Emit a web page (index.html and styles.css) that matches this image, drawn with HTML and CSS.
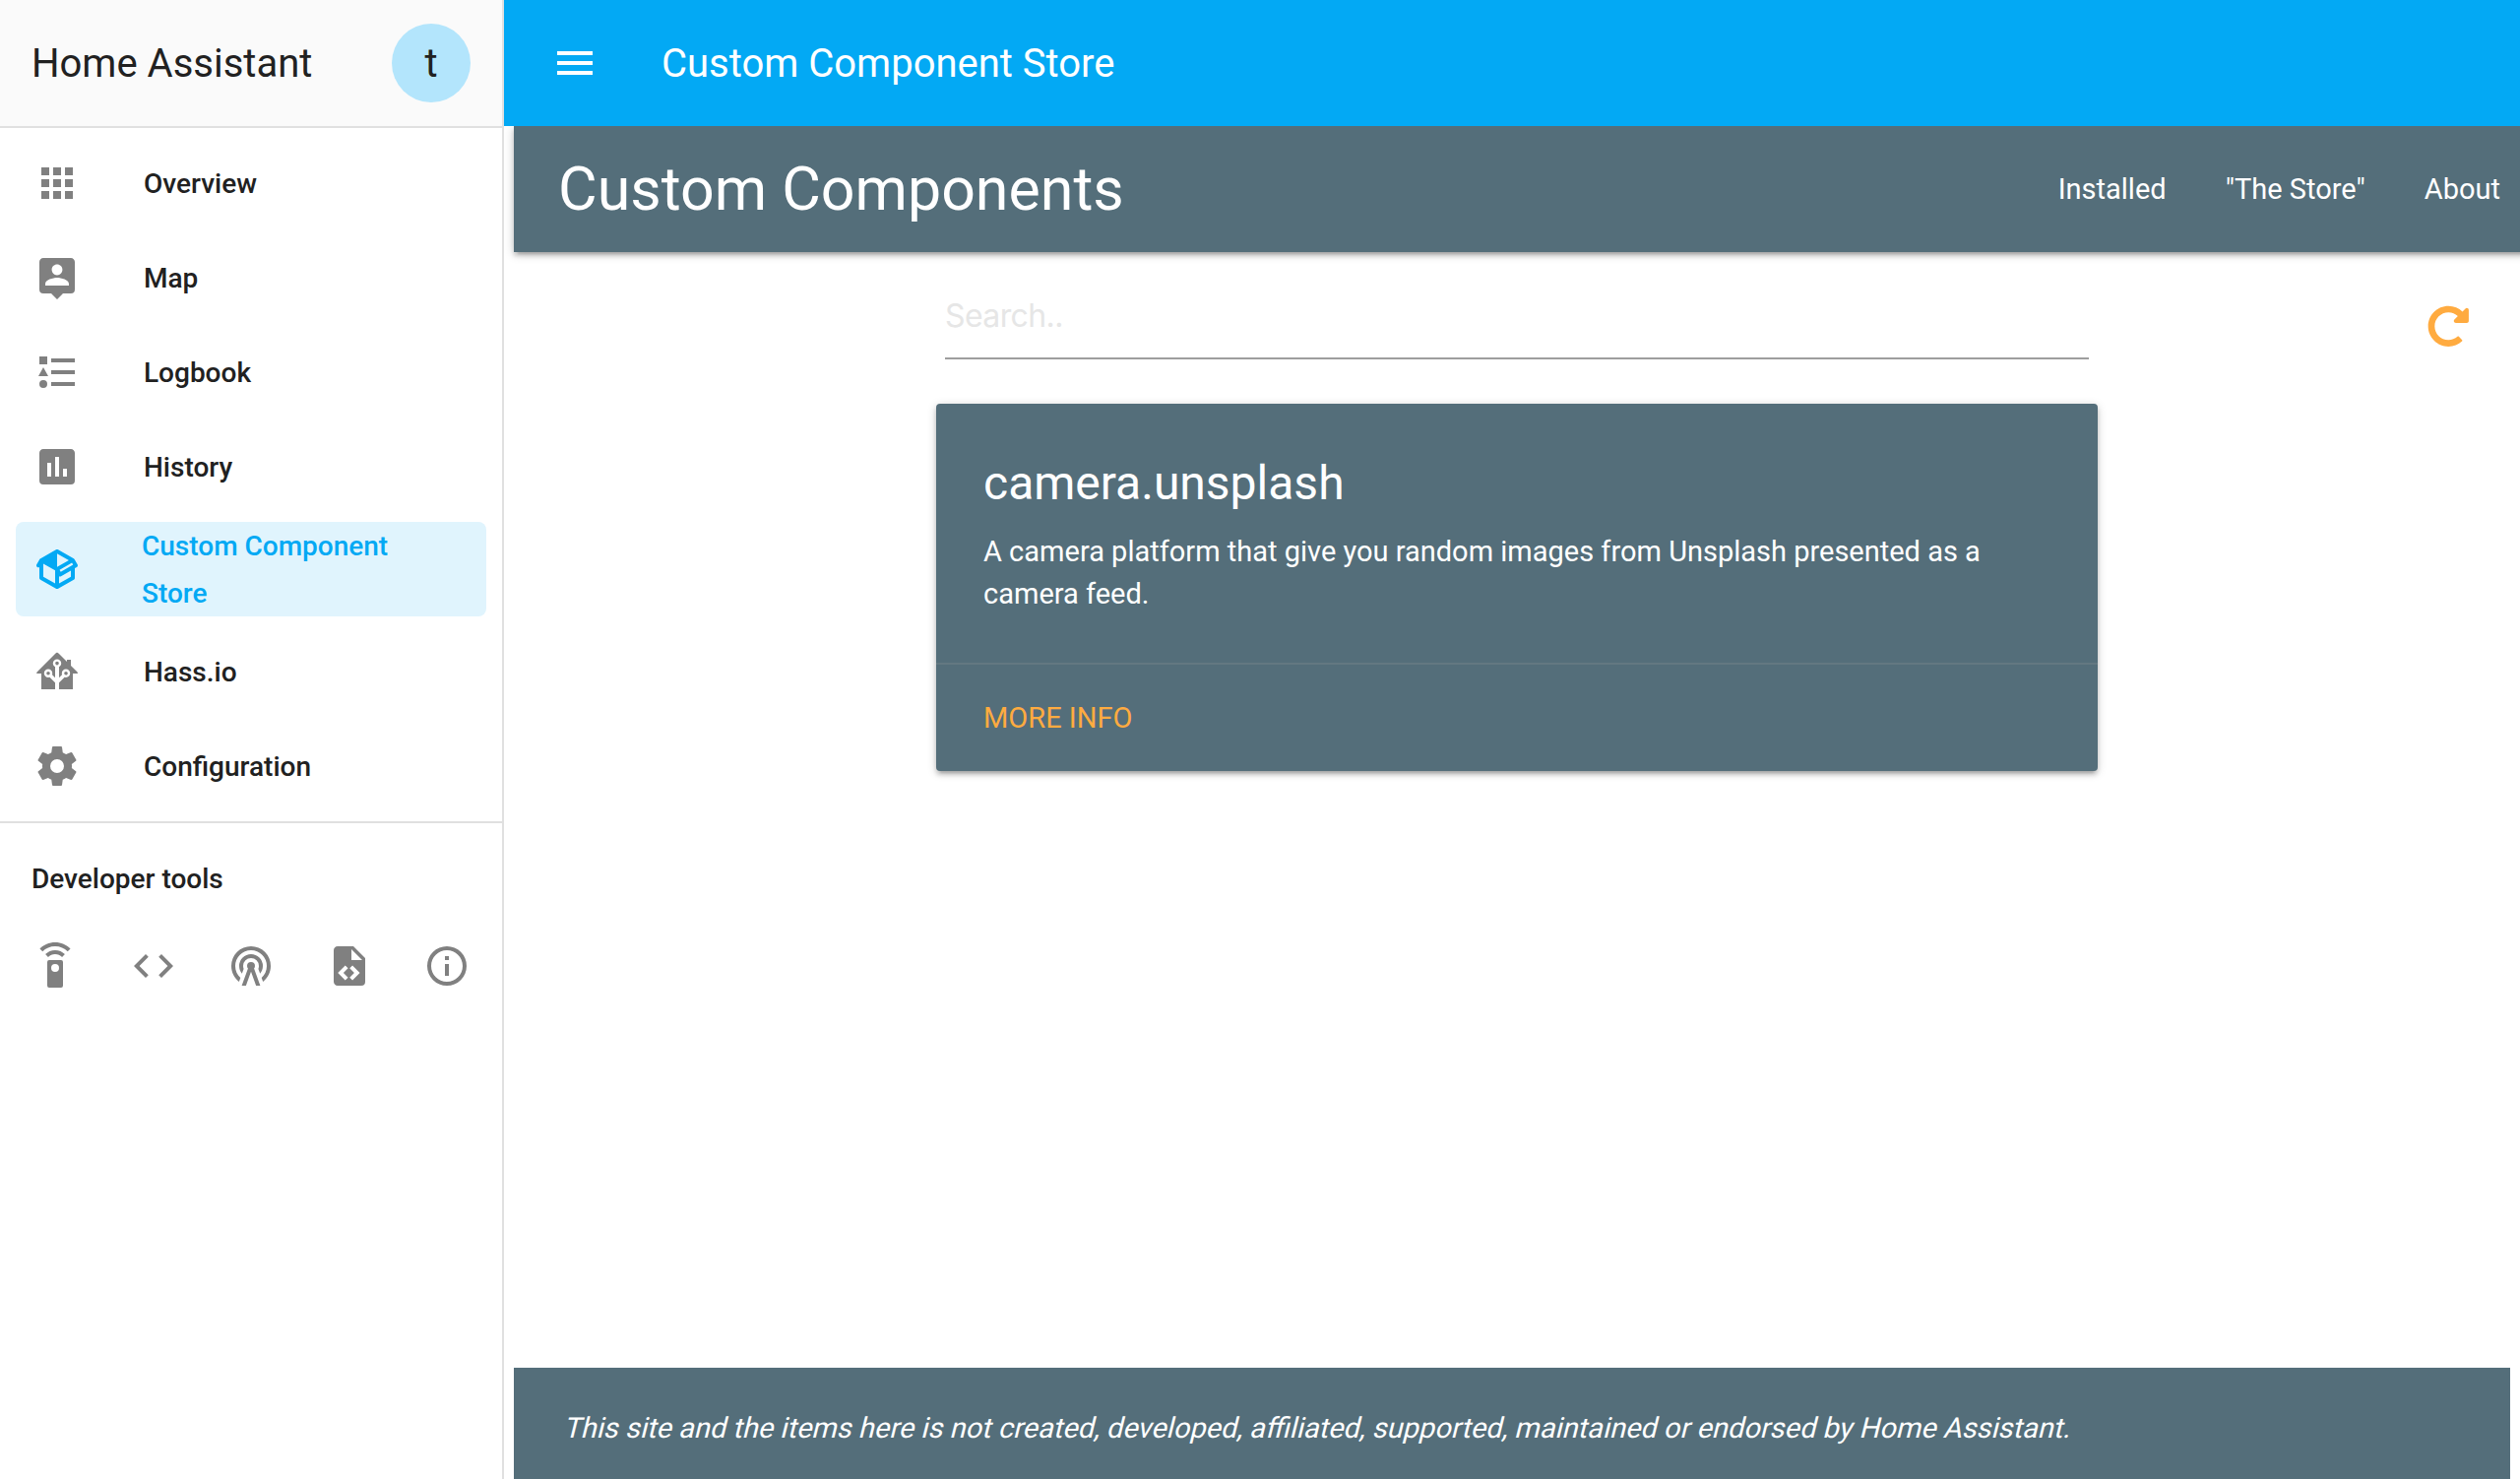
FILE: index.html
```html
<!DOCTYPE html>
<html lang="en">
<head>
<meta charset="utf-8">
<title>Custom Component Store</title>
<link rel="stylesheet" href="styles.css">
</head>
<body>
<div class="app">
  <aside class="sidebar">
    <header class="sidebar-header">
      <span>Home Assistant</span>
      <span class="avatar">t</span>
    </header>
    <nav class="menu">
      <a class="item"><svg class="icon" viewBox="0 0 24 24"><path d="M16,20H20V16H16M16,14H20V10H16M10,8H14V4H10M16,8H20V4H16M10,14H14V10H10M4,14H8V10H4M4,20H8V16H4M10,20H14V16H10M4,8H8V4H4V8Z"/></svg><span class="label">Overview</span></a>
      <a class="item"><svg class="icon" viewBox="0 0 24 24"><path d="M18,16H6V15.1C6,13.1 10,12 12,12C14,12 18,13.1 18,15.1M12,5.3C13.5,5.3 14.7,6.5 14.7,8C14.7,9.5 13.5,10.7 12,10.7C10.5,10.7 9.3,9.5 9.3,8C9.3,6.5 10.5,5.3 12,5.3M19,2H5C3.89,2 3,2.89 3,4V18A2,2 0 0,0 5,20H9L12,23L15,20H19A2,2 0 0,0 21,18V4C21,2.89 20.1,2 19,2Z"/></svg><span class="label">Map</span></a>
      <a class="item"><svg class="icon" viewBox="0 0 24 24"><path d="M5,9.5L7.5,14H2.5L5,9.5M3,4H7V8H3V4M5,20A2,2 0 0,0 7,18A2,2 0 0,0 5,16A2,2 0 0,0 3,18A2,2 0 0,0 5,20M9,5V7H21V5H9M9,19H21V17H9V19M9,13H21V11H9V13Z"/></svg><span class="label">Logbook</span></a>
      <a class="item"><svg class="icon" viewBox="0 0 24 24"><path d="M17,17H15V13H17M13,17H11V7H13M9,17H7V10H9M19,3H5C3.89,3 3,3.89 3,5V19A2,2 0 0,0 5,21H19A2,2 0 0,0 21,19V5C21,3.89 20.1,3 19,3Z"/></svg><span class="label">History</span></a>
      <a class="item active"><svg class="icon" viewBox="0 0 24 24"><path d="M2,10.96C1.5,10.68 1.35,10.07 1.63,9.59L3.13,7C3.24,6.8 3.41,6.66 3.6,6.58L11.43,2.18C11.59,2.06 11.79,2 12,2C12.21,2 12.41,2.06 12.57,2.18L20.47,6.62C20.66,6.72 20.82,6.88 20.91,7.08L22.36,9.6C22.64,10.08 22.47,10.69 22,10.96L21,11.54V16.5C21,16.88 20.79,17.21 20.47,17.38L12.57,21.82C12.41,21.94 12.21,22 12,22C11.79,22 11.59,21.94 11.43,21.82L3.53,17.38C3.21,17.21 3,16.88 3,16.5V10.96C2.7,11.13 2.32,11.14 2,10.96M12,4.15V4.15L12,10.85V10.85L17.96,7.5L12,4.15M5,15.91L11,19.29V12.58L5,9.21V15.91M19,15.91V12.69L14,15.59C13.67,15.77 13.3,15.76 13,15.6V19.29L19,15.91M13.85,13.36L20.13,9.73L19.55,8.72L13.27,12.35L13.85,13.36Z"/></svg><span class="label">Custom Component Store</span></a>
      <a class="item"><svg class="icon" viewBox="0 0 24 24"><path d="M21.8,13H20V21H13V17.67L15.79,14.88L16.5,15C17.66,15 18.6,14.06 18.6,12.9C18.6,11.74 17.66,10.8 16.5,10.8A2.1,2.1 0 0,0 14.4,12.9L14.5,13.61L13,15.13V9.65C13.66,9.29 14.1,8.6 14.1,7.8A2.1,2.1 0 0,0 12,5.7A2.1,2.1 0 0,0 9.9,7.8C9.9,8.6 10.34,9.29 11,9.65V15.13L9.5,13.61L9.6,12.9A2.1,2.1 0 0,0 7.5,10.8A2.1,2.1 0 0,0 5.4,12.9A2.1,2.1 0 0,0 7.5,15L8.21,14.88L11,17.67V21H4V13H2.25C1.83,13 1.42,13 1.42,12.79C1.43,12.57 1.85,12.15 2.28,11.72L11,3C11.33,2.67 11.67,2.33 12,2.33C12.33,2.33 12.67,2.67 13,3L17,7V6H19V9L21.78,11.78C22.18,12.18 22.59,12.59 22.6,12.8C22.6,13 22.2,13 21.8,13M7.5,12A0.9,0.9 0 0,1 8.4,12.9A0.9,0.9 0 0,1 7.5,13.8A0.9,0.9 0 0,1 6.6,12.9A0.9,0.9 0 0,1 7.5,12M16.5,12C17,12 17.4,12.4 17.4,12.9C17.4,13.4 17,13.8 16.5,13.8A0.9,0.9 0 0,1 15.6,12.9A0.9,0.9 0 0,1 16.5,12M12,6.9C12.5,6.9 12.9,7.3 12.9,7.8C12.9,8.3 12.5,8.7 12,8.7C11.5,8.7 11.1,8.3 11.1,7.8C11.1,7.3 11.5,6.9 12,6.9Z"/></svg><span class="label">Hass.io</span></a>
      <a class="item"><svg class="icon" viewBox="0 0 24 24"><path d="M12,15.5A3.5,3.5 0 0,1 8.5,12A3.5,3.5 0 0,1 12,8.5A3.5,3.5 0 0,1 15.5,12A3.5,3.5 0 0,1 12,15.5M19.43,12.97C19.47,12.65 19.5,12.33 19.5,12C19.5,11.67 19.47,11.34 19.43,11L21.54,9.37C21.73,9.22 21.78,8.95 21.66,8.73L19.66,5.27C19.54,5.05 19.27,4.96 19.05,5.05L16.56,6.05C16.04,5.66 15.5,5.32 14.87,5.07L14.5,2.42C14.46,2.18 14.25,2 14,2H10C9.75,2 9.54,2.18 9.5,2.42L9.13,5.07C8.5,5.32 7.96,5.66 7.44,6.05L4.95,5.05C4.73,4.96 4.46,5.05 4.34,5.27L2.34,8.73C2.21,8.95 2.27,9.22 2.46,9.37L4.57,11C4.53,11.34 4.5,11.67 4.5,12C4.5,12.33 4.53,12.65 4.57,12.97L2.46,14.63C2.27,14.78 2.21,15.05 2.34,15.27L4.34,18.73C4.46,18.95 4.73,19.03 4.95,18.95L7.44,17.94C7.96,18.34 8.5,18.68 9.13,18.93L9.5,21.58C9.54,21.82 9.75,22 10,22H14C14.25,22 14.46,21.82 14.5,21.58L14.87,18.93C15.5,18.67 16.04,18.34 16.56,17.94L19.05,18.95C19.27,19.03 19.54,18.95 19.66,18.73L21.66,15.27C21.78,15.05 21.73,14.78 21.54,14.63L19.43,12.97Z"/></svg><span class="label">Configuration</span></a>
    </nav>
    <section class="dev-tools">
      <div class="subheader">Developer tools</div>
      <div class="tool-row">
        <a class="tool"><svg class="icon" viewBox="0 0 24 24"><path d="M12,0C8.96,0 6.21,1.23 4.22,3.22L5.63,4.63C7.26,3 9.5,2 12,2C14.5,2 16.74,3 18.36,4.64L19.77,3.23C17.79,1.23 15.04,0 12,0M7.05,6.05L8.46,7.46C9.37,6.56 10.62,6 12,6C13.38,6 14.63,6.56 15.54,7.46L16.95,6.05C15.68,4.78 13.93,4 12,4C10.07,4 8.32,4.78 7.05,6.05M12,15A2,2 0 0,1 10,13A2,2 0 0,1 12,11A2,2 0 0,1 14,13A2,2 0 0,1 12,15M15,9H9A1,1 0 0,0 8,10V22A1,1 0 0,0 9,23H15A1,1 0 0,0 16,22V10A1,1 0 0,0 15,9Z"/></svg></a>
        <a class="tool"><svg class="icon" viewBox="0 0 24 24"><path d="M14.6,16.6L19.2,12L14.6,7.4L16,6L22,12L16,18L14.6,16.6M9.4,16.6L4.8,12L9.4,7.4L8,6L2,12L8,18L9.4,16.6Z"/></svg></a>
        <a class="tool"><svg class="icon" viewBox="0 0 24 24"><path d="M12,10A2,2 0 0,1 14,12C14,12.5 13.82,12.94 13.53,13.29L16.7,22H14.57L12,14.93L9.43,22H7.3L10.47,13.29C10.18,12.94 10,12.5 10,12A2,2 0 0,1 12,10M12,8A4,4 0 0,0 8,12C8,12.5 8.1,13 8.28,13.46L7.4,15.86C6.53,14.81 6,13.47 6,12A6,6 0 0,1 12,6A6,6 0 0,1 18,12C18,13.47 17.47,14.81 16.6,15.86L15.72,13.46C15.9,13 16,12.5 16,12A4,4 0 0,0 12,8M12,4A8,8 0 0,0 4,12C4,14.36 5,16.5 6.64,17.94L5.92,19.94C3.54,18.11 2,15.23 2,12A10,10 0 0,1 12,2A10,10 0 0,1 22,12C22,15.23 20.46,18.11 18.08,19.94L17.36,17.94C19,16.5 20,14.36 20,12A8,8 0 0,0 12,4Z"/></svg></a>
        <a class="tool"><svg class="icon" viewBox="0 0 24 24"><path d="M13,9H18.5L13,3.5V9M6,2H14L20,8V20A2,2 0 0,1 18,22H6C4.89,22 4,21.1 4,20V4C4,2.89 4.89,2 6,2M6.12,15.5L9.86,19.24L11.28,17.83L8.95,15.5L11.28,13.17L9.86,11.76L6.12,15.5M17.28,15.5L13.54,11.76L12.12,13.17L14.45,15.5L12.12,17.83L13.54,19.24L17.28,15.5Z"/></svg></a>
        <a class="tool"><svg class="icon" viewBox="0 0 24 24"><path d="M11,9H13V7H11M12,20C7.59,20 4,16.41 4,12C4,7.59 7.59,4 12,4C16.41,4 20,7.59 20,12C20,16.41 16.41,20 12,20M12,2A10,10 0 0,0 2,12A10,10 0 0,0 12,22A10,10 0 0,0 22,12A10,10 0 0,0 12,2M11,17H13V11H11V17Z"/></svg></a>
      </div>
    </section>
  </aside>

  <div class="panel">
    <header class="toolbar">
      <svg class="icon" viewBox="0 0 24 24"><path d="M3,6H21V8H3V6M3,11H21V13H3V11M3,16H21V18H3V16Z"/></svg>
      <span>Custom Component Store</span>
    </header>
    <div class="store">
      <nav class="store-nav">
        <span class="brand">Custom Components</span>
        <a class="link">Installed</a>
        <a class="link">"The Store"</a>
        <a class="link">About</a>
      </nav>
      <main class="content">
        <div class="search-row">
          <input class="search" type="text" placeholder="Search..">
          <svg class="reload" viewBox="0 0 512 512"><path d="M256.455 8c66.269.119 126.437 26.233 170.859 68.685l35.715-35.715C478.149 25.851 504 36.559 504 57.941V192c0 13.255-10.745 24-24 24H345.941c-21.382 0-32.09-25.851-16.971-40.971l41.75-41.75c-30.864-28.899-70.801-44.907-113.23-45.273-92.398-.798-170.283 73.977-169.484 169.442C88.764 348.009 162.184 424 256 424c41.127 0 79.997-14.678 110.629-41.556 4.743-4.161 11.906-3.908 16.368.553l39.662 39.662c4.872 4.872 4.631 12.815-.482 17.433C378.202 479.813 319.926 504 256 504 119.034 504 8.001 392.967 8 256.002 7.999 119.193 119.646 7.755 256.455 8z"/></svg>
        </div>
        <article class="card">
          <div class="card-content">
            <div class="card-title">camera.unsplash</div>
            <p class="card-text">A camera platform that give you random images from Unsplash presented as a camera feed.</p>
          </div>
          <div class="card-action"><a>MORE INFO</a></div>
        </article>
      </main>
      <footer class="notice"><span class="slanted">This site and the items here is not created, developed, affiliated, supported, maintained or endorsed by Home Assistant.</span></footer>
    </div>
  </div>
</div>
</body>
</html>
```
FILE: styles.css
```css
* { box-sizing: border-box; }

body {
  margin: 0;
  font-family: Roboto, "Noto Sans", sans-serif;
  color: #212121;
  background: #fff;
  -webkit-font-smoothing: antialiased;
}

.app {
  display: flex;
  height: 1502px;
  overflow: hidden;
}

.icon {
  width: 48px;
  height: 48px;
  flex: none;
  display: block;
  fill: currentColor;
}

/* Sidebar */
.sidebar {
  width: 512px;
  flex: none;
  border-right: 2px solid #e0e0e0;
}

.sidebar-header {
  display: flex;
  align-items: center;
  justify-content: space-between;
  height: 130px;
  padding: 1px 32px 0;
  border-bottom: 2px solid #e0e0e0;
  background: #fafafa;
  font-size: 40px;
}

.avatar {
  width: 80px;
  height: 80px;
  margin-top: -1px;
  border-radius: 50%;
  background: #b3e5fc;
  line-height: 81px;
  text-align: center;
}

.menu {
  padding: 8px 16px;
  border-bottom: 2px solid #e0e0e0;
}

.item {
  display: flex;
  align-items: center;
  height: 96px;
  padding-left: 18px;
  border-radius: 8px;
  font-size: 28px;
  font-weight: 500;
  line-height: 48px;
}

.item .icon { color: #808080; }

.label {
  margin-left: 64px;
  padding-top: 2px;
}

.item.active {
  margin: 8px 0;
  padding-right: 60px;
  background: #e0f4fd;
  color: #03a9f4;
}

.item.active .icon { color: #03a9f4; }
.item.active .label { margin-left: 62px; }

.subheader {
  padding: 33px 32px 0;
  font-size: 28px;
  font-weight: 500;
  line-height: 48px;
}

.tool-row {
  display: flex;
  justify-content: space-between;
  padding: 24px 16px 0;
}

.tool {
  padding: 16px;
  color: #808080;
}

/* Panel */
.panel {
  flex: 1;
  min-width: 0;
  display: flex;
  flex-direction: column;
}

.toolbar {
  display: flex;
  align-items: center;
  gap: 64px;
  height: 128px;
  flex: none;
  padding-left: 48px;
  background: #03a9f4;
  color: #fff;
  font-size: 40px;
}

.store {
  flex: 1;
  display: flex;
  flex-direction: column;
  padding-left: 10px;
  overflow: hidden;
  font-size: 29px;
  line-height: 43.5px;
}

.store-nav {
  display: flex;
  height: 128px;
  flex: none;
  margin-right: -10px;
  padding-left: 45px;
  background: #546e7a;
  color: #fff;
  line-height: 128px;
  box-shadow: 0 4px 4px 0 rgba(0, 0, 0, .14), 0 6px 2px -4px rgba(0, 0, 0, .12), 0 2px 10px 0 rgba(0, 0, 0, .2);
}

.brand {
  margin-right: auto;
  font-size: 60.9px;
  line-height: 130px;
}

.link { padding: 0 30px; }

.content {
  flex: 1;
  padding-left: 429px;
}

.search-row {
  display: flex;
  align-items: flex-start;
  justify-content: space-between;
  padding: 23px 51px 0 9px;
}

.search {
  width: 1162px;
  height: 86px;
  padding: 0 0 1px;
  border: 0;
  border-bottom: 2px solid #9e9e9e;
  background: transparent;
  font-family: Inter, sans-serif;
  font-size: 32px;
  letter-spacing: -.6px;
}

.search::placeholder { color: #e6e6e6; }

.reload {
  width: 42.6px;
  height: 42.6px;
  margin-top: 31px;
  fill: #ffab40;
}

.card {
  width: 1180px;
  margin-top: 45px;
  border-radius: 4px;
  background: #546e7a;
  color: #fff;
  box-shadow: 0 4px 4px 0 rgba(0, 0, 0, .14), 0 6px 2px -4px rgba(0, 0, 0, .12), 0 2px 10px 0 rgba(0, 0, 0, .2);
}

.card-content { padding: 49px 48px 47.5px; }

.card-title {
  margin-bottom: 15.5px;
  font-size: 48px;
  line-height: 64px;
}

.card-text { margin: 0; }

.card-action {
  padding: 33px 48px 31px;
  border-top: 2px solid rgba(160, 160, 160, .2);
  color: #ffab40;
}

.notice {
  height: 113px;
  flex: none;
  margin-right: 10px;
  padding: 40px 0 0 50px;
  background: #546e7a;
  color: #fff;
}

/* Upright letterforms slanted from the baseline */
.slanted {
  display: inline-block;
  white-space: nowrap;
  transform: skewX(-14deg);
  transform-origin: 0 31.7px;
}
```
